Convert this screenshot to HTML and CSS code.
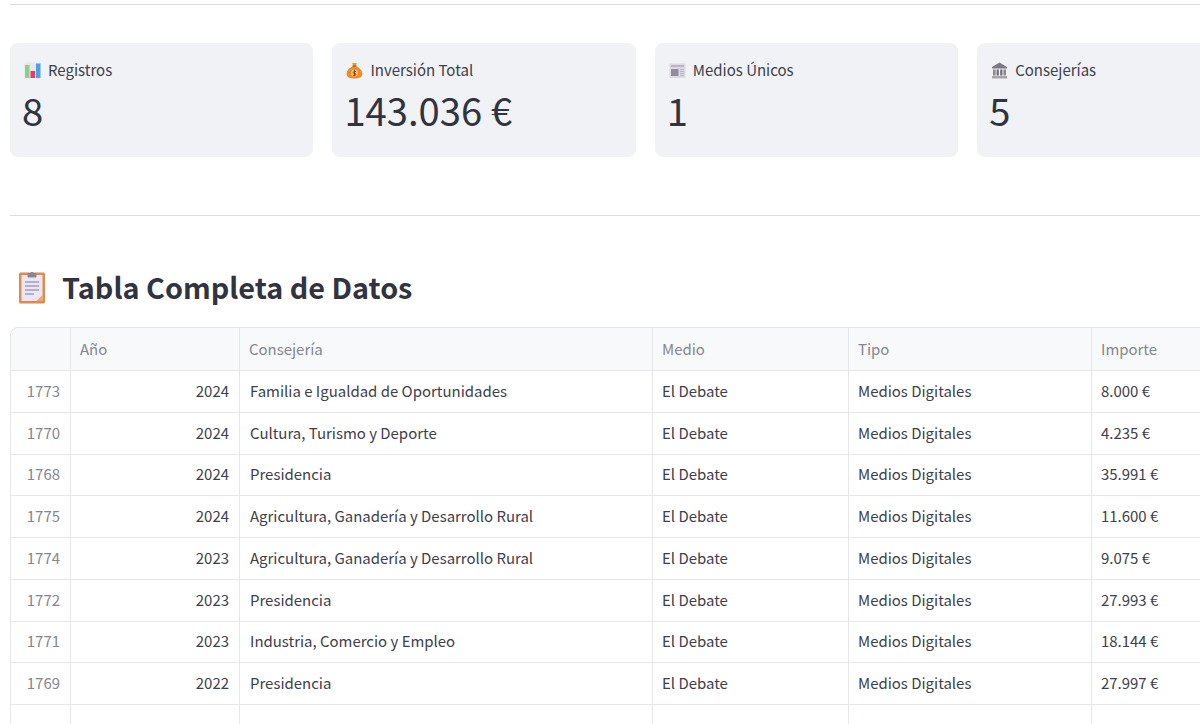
FILE: index.html
```html
<!DOCTYPE html>
<html lang="es">
<head>
  <meta charset="UTF-8">
  <title>Tabla Completa de Datos</title>
  <meta name="viewport" content="width=device-width, initial-scale=1.0">
  <link rel="stylesheet" href="styles.css">
</head>
<body>

<div class="page">
  <hr class="rule rule-top">

  <!-- metricas -->
  <div class="metrics">
    <div class="metric">
      <div class="metric-label">
        <svg class="emoji" viewBox="0 0 17 17">
          <rect x="0.5" y="0.5" width="16" height="16" fill="#e9e7ec"/>
          <rect x="1" y="3" width="4.5" height="13" fill="#8fcf85"/>
          <rect x="6.5" y="9" width="4.5" height="7" fill="#e8396b"/>
          <rect x="12" y="1.5" width="4.5" height="14.5" fill="#4aa3e0"/>
        </svg>
        <span>Registros</span>
      </div>
      <div class="metric-value">8</div>
    </div>
    <div class="metric">
      <div class="metric-label">
        <svg class="emoji" viewBox="0 0 17 17">
          <path d="M6 1h5l-1.2 3.2H7.2z" fill="#e9a23b"/>
          <path d="M6.6 4.2h3.8c3 1.6 6 4.4 6 7.6 0 3.4-3 4.7-7.9 4.7S.6 15.200.6 11.800c0-3.200 3-6 6-7.600z" fill="#ee8a2a"/>
          <rect x="6.600" y="3.400" width="3.800" height="1.200" fill="#8a5a2b"/>
          <circle cx="8.500" cy="11" r="3.600" fill="#f7c873"/>
          <path d="M8.500 7.800v6.400M10 9.500H7.900a1 1 0 0 0 0 1.900h1.200a1 1 0 0 1 0 1.900H7" fill="none" stroke="#8a3b12" stroke-width="0.900"/>
        </svg>
        <span>Inversión Total</span>
      </div>
      <div class="metric-value">143.036 €</div>
    </div>
    <div class="metric">
      <div class="metric-label">
        <svg class="emoji" viewBox="0 0 17 17">
          <rect x="0.500" y="1.500" width="16" height="14.500" fill="#dcd9e2"/>
          <rect x="2" y="3" width="13" height="2" fill="#b9b5c2"/>
          <rect x="2" y="7" width="7.500" height="7" fill="#918d9b"/>
          <path d="M11 7.500h4M11 9.500h4M11 11.500h4M11 13.500h4" stroke="#b9b5c2" stroke-width="1"/>
        </svg>
        <span>Medios Únicos</span>
      </div>
      <div class="metric-value">1</div>
    </div>
    <div class="metric">
      <div class="metric-label">
        <svg class="emoji" viewBox="0 0 17 17">
          <path d="M8.500 0.500L16 5v1.500H1V5z" fill="#7f7986"/>
          <rect x="2" y="7.500" width="2.600" height="6" fill="#8d8794"/>
          <rect x="5.600" y="7.500" width="2.200" height="6" fill="#6f6a78"/>
          <rect x="9.200" y="7.500" width="2.200" height="6" fill="#6f6a78"/>
          <rect x="12.400" y="7.500" width="2.600" height="6" fill="#8d8794"/>
          <rect x="1" y="14" width="15" height="2.500" fill="#a9a4b0"/>
        </svg>
        <span>Consejerías</span>
      </div>
      <div class="metric-value">5</div>
    </div>
  </div>

  <hr class="rule rule-mid">

  <h2 class="title">
    <svg class="title-icon" viewBox="0 0 27 34">
      <rect x="0.500" y="2.500" width="26" height="31" rx="1.500" fill="#e08a4e"/>
      <rect x="3" y="5" width="21" height="26" fill="#ebe6f2"/>
      <path d="M18 31l6-6v6z" fill="#f0a868"/>
      <path d="M9.500 3.500h2.200a2 2 0 0 1 3.600 0h2.200v3.500h-8z" fill="#8b8694" stroke="#8b8694"/>
      <path d="M6.500 12h14M6.500 16h14M6.500 20h14M6.500 24h9" stroke="#9fa0bd" stroke-width="1.300"/>
    </svg>
    <span>Tabla Completa de Datos</span>
  </h2>

  <!-- tabla -->
  <table class="data">
    <thead>
      <tr><th></th><th>Año</th><th>Consejería</th><th>Medio</th><th>Tipo</th><th>Importe</th></tr>
    </thead>
    <tbody>
      <tr><td class="idx">1773</td><td class="num">2024</td><td>Familia e Igualdad de Oportunidades</td><td>El Debate</td><td>Medios Digitales</td><td>8.000 €</td></tr>
      <tr><td class="idx">1770</td><td class="num">2024</td><td>Cultura, Turismo y Deporte</td><td>El Debate</td><td>Medios Digitales</td><td>4.235 €</td></tr>
      <tr><td class="idx">1768</td><td class="num">2024</td><td>Presidencia</td><td>El Debate</td><td>Medios Digitales</td><td>35.991 €</td></tr>
      <tr><td class="idx">1775</td><td class="num">2024</td><td>Agricultura, Ganadería y Desarrollo Rural</td><td>El Debate</td><td>Medios Digitales</td><td>11.600 €</td></tr>
      <tr><td class="idx">1774</td><td class="num">2023</td><td>Agricultura, Ganadería y Desarrollo Rural</td><td>El Debate</td><td>Medios Digitales</td><td>9.075 €</td></tr>
      <tr><td class="idx">1772</td><td class="num">2023</td><td>Presidencia</td><td>El Debate</td><td>Medios Digitales</td><td>27.993 €</td></tr>
      <tr><td class="idx">1771</td><td class="num">2023</td><td>Industria, Comercio y Empleo</td><td>El Debate</td><td>Medios Digitales</td><td>18.144 €</td></tr>
      <tr><td class="idx">1769</td><td class="num">2022</td><td>Presidencia</td><td>El Debate</td><td>Medios Digitales</td><td>27.997 €</td></tr>
      <tr><td></td><td></td><td></td><td></td><td></td><td></td></tr>
    </tbody>
  </table>
</div>

</body>
</html>
```

FILE: styles.css
```css
* {
  margin: 0;
  padding: 0;
  box-sizing: border-box;
}

html, body {
  height: 724px;
  overflow: hidden;
}

body {
  background: #fff;
  color: #31333f;
  font-family: "Noto Sans CJK SC", "Noto Sans", sans-serif;
}

.page {
  width: 1290px;
  padding: 4px 0 0 10px;
}

.rule {
  border: 0;
  border-top: 1px solid #dcdde0;
}

.metrics {
  display: flex;
  gap: 19.200px;
  margin-top: 38px;
}

.metric {
  width: 303.200px;
  height: 114px;
  flex: none;
  background: #f0f2f6;
  border-radius: 8px;
  padding: 14px 12px;
}

.metric-label {
  display: flex;
  align-items: center;
  gap: 7px;
  height: 26px;
  padding-left: 2px;
  font-size: 15px;
  line-height: 26px;
  color: #3e404b;
}

.emoji {
  width: 17px;
  height: 17px;
  flex: none;
}

.metric-value {
  margin-top: 2px;
  font-size: 38.200px;
  line-height: 50px;
}

.rule-mid {
  margin-top: 58px;
}

.title {
  display: flex;
  align-items: center;
  gap: 15px;
  height: 40px;
  margin-top: 51px;
  padding-left: 7px;
  font-size: 28.800px;
  line-height: 40px;
  font-weight: 600;
}

.title-icon {
  width: 30px;
  height: 34px;
  flex: none;
}

.data {
  width: 1280px;
  margin-top: 20px;
  table-layout: fixed;
  border-collapse: separate;
  border-spacing: 0;
  border-top: 1px solid #e6e7eb;
  border-left: 1px solid #e6e7eb;
  border-top-left-radius: 8px;
  font-size: 14.960px;
}

.data th:nth-child(1) { width: 60px; }
.data th:nth-child(2) { width: 169px; }
.data th:nth-child(3) { width: 413px; }
.data th:nth-child(4) { width: 196px; }
.data th:nth-child(5) { width: 243px; }

.data th,
.data td {
  border-right: 1px solid #e6e7eb;
  border-bottom: 1px solid #e6e7eb;
  padding: 0 10px 2px 9px;
  text-align: left;
  font-weight: 400;
  white-space: nowrap;
}

.data td:nth-child(3) {
  padding-left: 10px;
}

.data th {
  height: 43px;
  background: #f8f9fb;
  color: #85868e;
}

.data td {
  height: 41.750px;
  color: #3e404b;
}

.data th:first-child {
  border-top-left-radius: 8px;
}

.data .idx {
  text-align: right;
  color: #85868e;
}

.data .num {
  text-align: right;
}
```
